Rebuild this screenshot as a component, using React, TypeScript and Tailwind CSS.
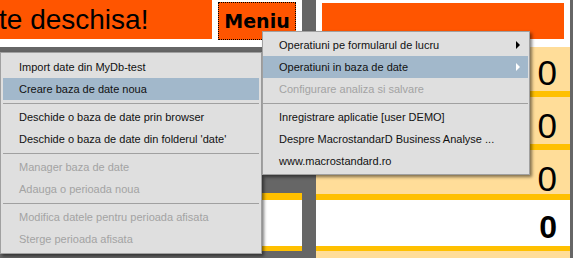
import React from "react";

const ink = "text-[#111]";

function Arrow({ white }: { white?: boolean }) {
  return (
    <svg width="5" height="8" viewBox="0 0 5 8" className="absolute right-[7px] top-[7px]">
      <path d="M0 0 L4 4 L0 8 Z" fill={white ? "#ffffff" : "#000000"} />
    </svg>
  );
}

type Item = { t?: string; sep?: boolean; dis?: boolean; hl?: boolean; sub?: boolean };

function Menu({ items, pl }: { items: Item[]; pl: string }) {
  return (
    <>
      {items.map((it, i) =>
        it.sep ? (
          <div key={i} className="h-[6px] flex items-center">
            <div className="h-px w-full bg-[#a0a0a0]" />
          </div>
        ) : (
          <div
            key={i}
            className={`relative h-[22px] flex items-center ${pl} ${it.hl ? "bg-[#a2b8cb]" : ""} ${
              it.dis ? "text-[#a3a3a3]" : ink
            }`}
          >
            <span className="whitespace-nowrap">{it.t}</span>
            {it.sub && <Arrow white={it.hl} />}
          </div>
        )
      )}
    </>
  );
}

export default function App() {
  const left: Item[] = [
    { t: "Import date din MyDb-test" },
    { t: "Creare baza de date noua", hl: true },
    { sep: true },
    { t: "Deschide o baza de date prin browser" },
    { t: "Deschide o baza de date din folderul 'date'" },
    { sep: true },
    { t: "Manager baza de date", dis: true },
    { t: "Adauga o perioada noua", dis: true },
    { sep: true },
    { t: "Modifica datele pentru perioada afisata", dis: true },
    { t: "Sterge perioada afisata", dis: true },
  ];
  const right: Item[] = [
    { t: "Operatiuni pe formularul de lucru", sub: true },
    { t: "Operatiuni in baza de date", sub: true, hl: true },
    { t: "Configurare analiza si salvare", dis: true },
    { sep: true },
    { t: "Inregistrare aplicatie [user DEMO]" },
    { t: "Despre MacrostandarD Business Analyse ..." },
    { t: "www.macrostandard.ro" },
  ];
  return (
    <div
      className="relative w-[573px] h-[258px] overflow-hidden bg-white flex"
      style={{ fontFamily: '"Liberation Sans", Arial, sans-serif' }}
    >
      {/* left column */}
      <div className="w-[302px] flex flex-col">
        <div className="h-[47px] flex items-start bg-white">
          <div className="w-[212px] h-[39px] bg-[#ff5500] overflow-hidden">
            <div className="text-[28px] leading-none text-black whitespace-nowrap pt-[6px] -ml-[1px]">
              te deschisa!
            </div>
          </div>
          <div
            className="ml-[6px] mt-[2px] w-[78px] h-[38px] bg-[#ff5500] border border-dotted border-black flex items-center justify-center text-[19px] font-bold text-black"
            style={{ fontFamily: '"DejaVu Sans", sans-serif' }}
          >
            Meniu
          </div>
        </div>
        <div className="flex-1 bg-[#666] flex flex-col pt-[146px]">
          <div className="h-[58px] bg-white border-y-[7px] border-[#ffc000] border-b-[5px]" />
        </div>
      </div>
      {/* gutter */}
      <div className="w-[14px] bg-[#666]" />
      {/* right column */}
      <div className="w-[254px] flex flex-col">
        <div className="h-[47px] bg-white px-[6px] pt-[3px]">
          <div className="h-[36px] bg-[#ff5500]" />
        </div>
        <div className="flex-1 bg-[#ffdd99] flex flex-col">
          <div className="h-[44px] flex justify-end items-start pt-[8px] pr-[13px] text-[35px] leading-none">0</div>
          <div className="h-[6px] bg-[#ffc000]" />
          <div className="h-[47px] flex justify-end items-start pt-[11px] pr-[13px] text-[35px] leading-none">0</div>
          <div className="h-[6px] bg-[#ffc000]" />
          <div className="h-[44px] flex justify-end items-start pt-[11px] pr-[13px] text-[35px] leading-none">0</div>
          <div className="h-[6px] bg-[#ffc000]" />
          <div className="h-[46px] bg-white flex justify-end items-start pt-[11px] pr-[13px] text-[32px] font-bold leading-none">
            0
          </div>
          <div className="h-[5px] bg-[#ffc000]" />
        </div>
      </div>
      <div className="w-[3px] bg-[#666]" />

      {/* left submenu */}
      <div className="absolute left-0 top-[52px] w-[262px] bg-[#dfdfdf] border border-[#a0a0a0] px-[2px] py-[3px] text-[11px] shadow-[2px_2px_3px_rgba(0,0,0,0.5)]">
        <Menu items={left} pl="pl-[16px]" />
      </div>
      {/* main menu */}
      <div className="absolute left-[262px] top-[31px] w-[268px] bg-[#dfdfdf] border border-[#a0a0a0] pl-0 pr-[1px] py-[2px] text-[11px] shadow-[2px_2px_3px_rgba(0,0,0,0.5)]">
        <Menu items={right} pl="pl-[16px]" />
      </div>
    </div>
  );
}
